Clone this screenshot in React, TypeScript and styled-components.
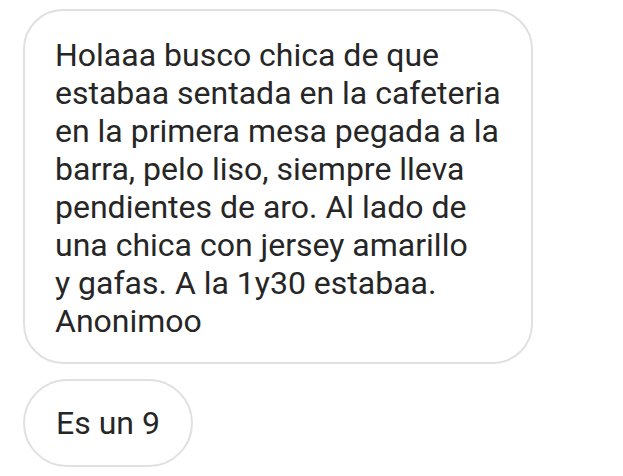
import React from "react";
import styled, { createGlobalStyle } from "styled-components";

const Global = createGlobalStyle`
  html, body { margin: 0; padding: 0; background: #ffffff; }
  body { font-family: Roboto, "Noto Sans", "Liberation Sans", sans-serif; }
`;

const Thread = styled.div`
  display: flex;
  flex-direction: column;
  align-items: flex-start;
  gap: 15px;
  padding: 9px 0 0 23px;
`;

const Bubble = styled.div<{ $pill?: boolean }>`
  box-sizing: border-box;
  background: #ffffff;
  border: 2px solid #e0e0e0;
  border-radius: ${(p) => (p.$pill ? "44px" : "40px")};
  padding: ${(p) => (p.$pill ? "23px 31px" : "25px 30px 22px 30px")};
  width: ${(p) => (p.$pill ? "auto" : "510px")};
  color: #262626;
  font-size: 32px;
  line-height: 38px;
  white-space: nowrap;
`;

const lines = [
  "Holaaa busco chica de que",
  "estabaa sentada en la cafeteria",
  "en la primera mesa pegada a la",
  "barra, pelo liso, siempre lleva",
  "pendientes de aro. Al lado de",
  "una chica con jersey amarillo",
  "y gafas. A la 1y30 estabaa.",
  "Anonimoo",
];

export default function App() {
  return (
    <>
      <Global />
      <Thread>
        <Bubble>
          {lines.map((l, i) => (
            <React.Fragment key={i}>
              {l}
              {i < lines.length - 1 && <br />}
            </React.Fragment>
          ))}
        </Bubble>
        <Bubble $pill>Es un 9</Bubble>
      </Thread>
    </>
  );
}
